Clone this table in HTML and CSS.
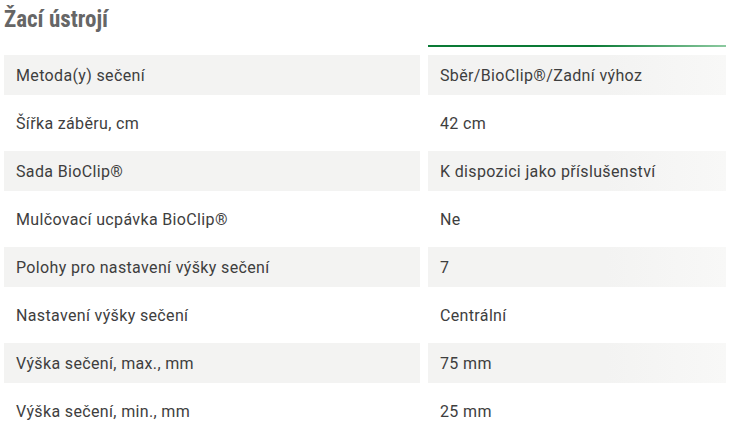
FILE: index.html
```html
<!DOCTYPE html>
<html lang="cs">
<head>
<meta charset="utf-8">
<link rel="stylesheet" href="styles.css">
</head>
<body>
<div class="page">
  <h2 class="title">Žací ústrojí</h2>
  <div class="specs">
    <div class="spacer"></div>
    <div class="rule"></div>

    <div class="cell label shade">Metoda(y) sečení</div>
    <div class="cell value shade">Sběr/BioClip®/Zadní výhoz</div>

    <div class="cell label">Šířka záběru, cm</div>
    <div class="cell value">42 cm</div>

    <div class="cell label shade">Sada BioClip®</div>
    <div class="cell value shade">K dispozici jako příslušenství</div>

    <div class="cell label">Mulčovací ucpávka BioClip®</div>
    <div class="cell value">Ne</div>

    <div class="cell label shade">Polohy pro nastavení výšky sečení</div>
    <div class="cell value shade">7</div>

    <div class="cell label">Nastavení výšky sečení</div>
    <div class="cell value">Centrální</div>

    <div class="cell label shade">Výška sečení, max., mm</div>
    <div class="cell value shade">75 mm</div>

    <div class="cell label">Výška sečení, min., mm</div>
    <div class="cell value">25 mm</div>
  </div>
</div>
</body>
</html>
```

FILE: styles.css
```css
html, body {
  margin: 0;
  padding: 0;
  background: #ffffff;
}

.page {
  padding: 0 4px;
  font-family: Roboto, "Liberation Sans", sans-serif;
}

.title {
  margin: 0;
  padding-top: 6px;
  height: 44px;
  box-sizing: border-box;
  font-family: "Roboto Condensed", "DejaVu Sans Condensed", Roboto, sans-serif;
  font-stretch: condensed;
  font-weight: 700;
  font-size: 23px;
  line-height: 28px;
  color: #666666;
}

.specs {
  display: grid;
  grid-template-columns: 416px 298px;
  column-gap: 8px;
  row-gap: 8px;
  grid-auto-rows: 40px;
  grid-template-rows: 3px;
}

.spacer { height: 3px; }

.rule {
  height: 2px;
  margin-top: 1px;
  background: linear-gradient(to right, #0a7a35 0%, #0a7a35 55%, #8ccaa0 100%);
}

.cell {
  display: flex;
  align-items: center;
  padding-left: 12px;
  font-size: 16px;
  font-weight: 400;
  color: #3e3e3e;
  letter-spacing: 0.35px;
}

.label.shade {
  background: #f3f3f2;
}

.value.shade {
  background: linear-gradient(to right, #f3f3f2 0%, #f3f3f2 60%, #f8f8f7 100%);
}
```
